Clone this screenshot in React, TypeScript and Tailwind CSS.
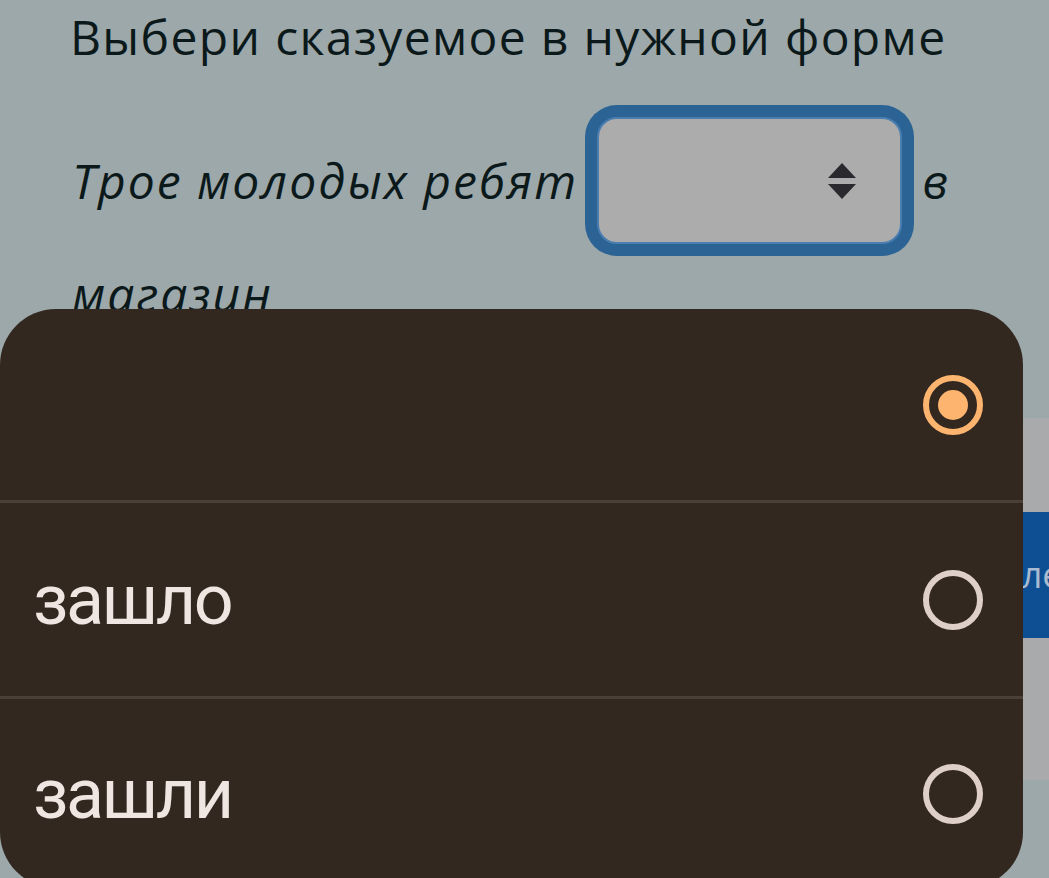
import React from "react";

type Option = { label: string; checked: boolean };

const options: Option[] = [
  { label: "", checked: true },
  { label: "зашло", checked: false },
  { label: "зашли", checked: false },
];

function Radio({ checked }: { checked: boolean }) {
  if (checked) {
    return (
      <span className="flex h-[60px] w-[60px] items-center justify-center rounded-full border-[6px] border-[#fdb46f]">
        <span className="h-[30px] w-[30px] rounded-full bg-[#fdb46f]" />
      </span>
    );
  }
  return <span className="block h-[60px] w-[60px] rounded-full border-[6px] border-[#ded0c8]" />;
}

function SortIcon() {
  return (
    <svg width="28" height="36" viewBox="0 0 28 36" className="block">
      <path d="M14 0 L28 15 L0 15 Z" fill="#2a2a2e" />
      <path d="M0 21 L28 21 L14 36 Z" fill="#2a2a2e" />
    </svg>
  );
}

export default function App() {
  return (
    <div
      className="relative h-[878px] w-[1049px] overflow-hidden bg-[#9da8aa]"
      style={{ fontFamily: "'Open Sans', Lato, sans-serif" }}
    >
      {/* task text */}
      <div className="pl-[70px] pt-[7px] text-[#0b191b]">
        <h1 className="text-[48px] leading-[60px] font-normal tracking-[1.35px]">Выбери сказуемое в нужной форме</h1>
        <div className="mt-[50px] flex items-center italic text-[48px] leading-[60px]">
          <span className="ml-[2px] tracking-[2px]">Трое молодых ребят</span>
          <span className="ml-[19px] flex h-[127px] w-[305px] items-center justify-end rounded-[20px] border-2 border-[#4a7db0] bg-[#acacac] pr-[44px] ring-[12px] ring-[#2c6395]">
            <SortIcon />
          </span>
          <span className="ml-[20px]">в</span>
        </div>
        <div className="mt-[20px] pl-[2px] italic text-[48px] leading-[60px] tracking-[2px]">магазин</div>
      </div>

      {/* card under the sheet */}
      <div className="absolute left-0 top-[418px] h-[362px] w-full bg-[#a9aaab]">
        <div className="ml-[940px] mt-[94px] flex h-[126px] w-[200px] items-center bg-[#0d4f92] pl-[37px] text-[36px] text-[#aabbd1]">
          Далее
        </div>
      </div>

      {/* bottom sheet with options */}
      <div
        className="absolute left-0 top-[309px] h-[579px] w-[1023px] overflow-hidden rounded-[56px] bg-[#322820]"
        style={{ fontFamily: "Roboto, 'Noto Sans', sans-serif" }}
      >
        {options.map((o, i) => (
          <div
            key={i}
            className={
              "flex items-center justify-between pl-[33px] pr-[40px] " +
              (i === 0
                ? "h-[194px] border-b-[3px] border-[#4b4037]"
                : i === 1
                  ? "h-[196px] border-b-[3px] border-[#4b4037]"
                  : "h-[189px]")
            }
          >
            <span className="text-[70px] leading-none tracking-[-2.5px] text-[#efe6e1]">{o.label}</span>
            <Radio checked={o.checked} />
          </div>
        ))}
      </div>
    </div>
  );
}
